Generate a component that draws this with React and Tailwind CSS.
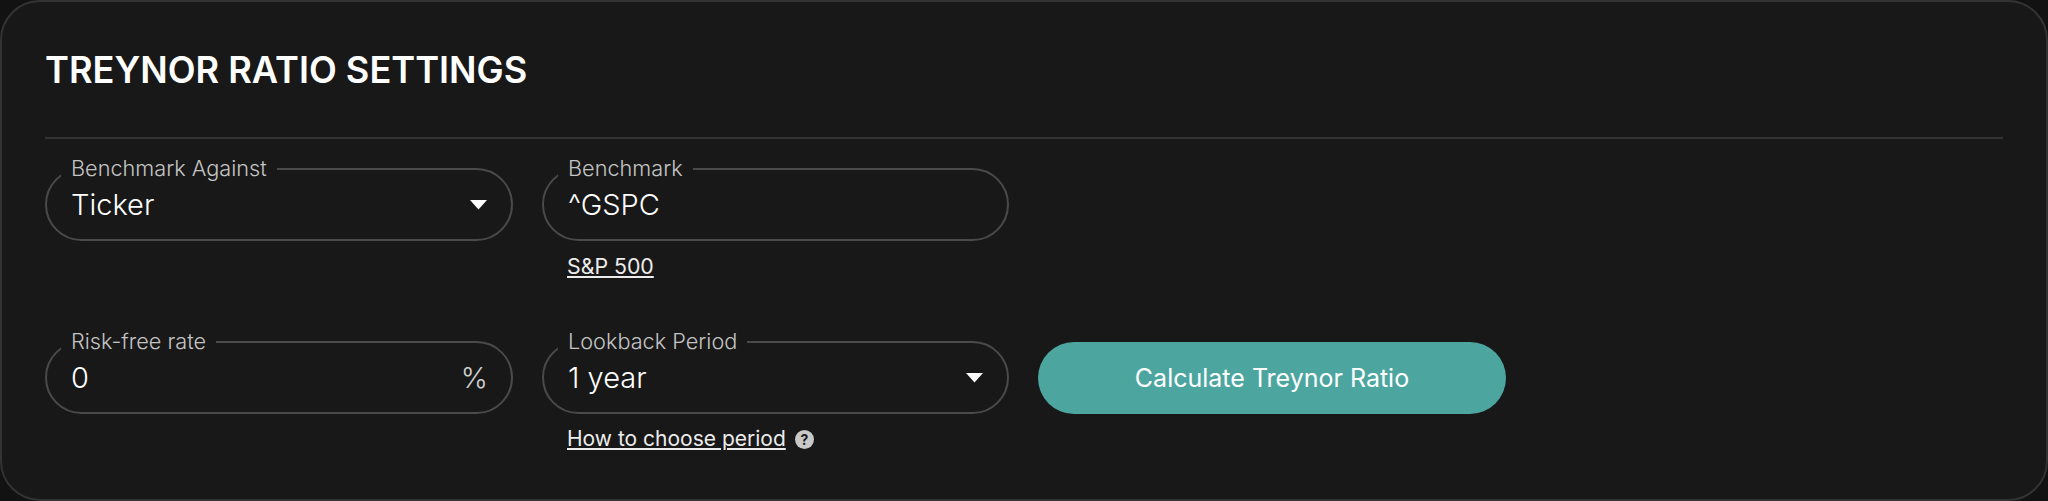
import React from 'react'

const font = { fontFamily: 'Inter' }

// Outlined field with a label sitting in the border notch
function Field({ label, children }) {
  return (
    <fieldset className="h-[83px] w-full min-w-0 rounded-full border-2 border-[#4a4a4a] pl-[24px] pr-[23px]">
      <legend className="-ml-[10px] -translate-y-px px-[10px] text-[21.7px] leading-[22px] font-light whitespace-nowrap text-[#c4c4c4]">{label}</legend>
      <div className="-mt-[4px] flex h-[58px] items-center justify-between text-[29px] font-light text-white">
        {children}
      </div>
    </fieldset>
  )
}

function Caret() {
  return (
    <svg width="19" height="11" viewBox="0 0 19 11" className="-mt-[2px]">
      <path d="M1 1 H18 L9.5 10.5 Z" fill="#fff" />
    </svg>
  )
}

function HelpIcon() {
  return (
    <svg width="19" height="19" viewBox="0 0 19 19">
      <circle cx="9.5" cy="9.5" r="9.5" fill="#c8c8c8" />
      <text x="9.5" y="14.5" textAnchor="middle" fontSize="14" fontWeight="700" fill="#181818" fontFamily="Inter">?</text>
    </svg>
  )
}

export default function App() {
  return (
    <div className="h-[501px] w-[2048px] bg-[#121212]" style={font}>
      <div className="h-full rounded-[40px] border-2 border-[#333] bg-[#181818] px-[43px]">
        <h2 className="pt-[46px] text-[36.2px] leading-[44px] font-semibold text-white">TREYNOR RATIO SETTINGS</h2>
        <div className="mt-[45px] mb-[19px] h-[2px] bg-[#333]" />
        <div className="grid grid-cols-[468px_467px_468px] gap-x-[29px]">
          <Field label="Benchmark Against">
            <span>Ticker</span>
            <Caret />
          </Field>
          <div>
            <Field label="Benchmark">
              <span>^GSPC</span>
            </Field>
            <a className="mt-[11px] ml-[25px] block w-fit text-[21.3px] leading-[28px] text-[#ececec] underline underline-offset-2">S&amp;P 500</a>
          </div>
          <div />
          <div className="mt-[51px]">
            <Field label="Risk-free rate">
              <span>0</span>
              <span className="text-[#cfcfcf]">%</span>
            </Field>
          </div>
          <div className="mt-[51px]">
            <Field label="Lookback Period">
              <span>1 year</span>
              <Caret />
            </Field>
            <div className="mt-[11px] ml-[25px] flex items-center gap-[9px]">
              <a className="text-[21px] leading-[28px] text-[#ececec] underline underline-offset-2">How to choose period</a>
              <HelpIcon />
            </div>
          </div>
          <div className="mt-[62px]">
            <button className="h-[72px] w-full rounded-full bg-[#4ca69f] pt-[2px] text-[25px] text-white">Calculate Treynor Ratio</button>
          </div>
        </div>
      </div>
    </div>
  )
}
